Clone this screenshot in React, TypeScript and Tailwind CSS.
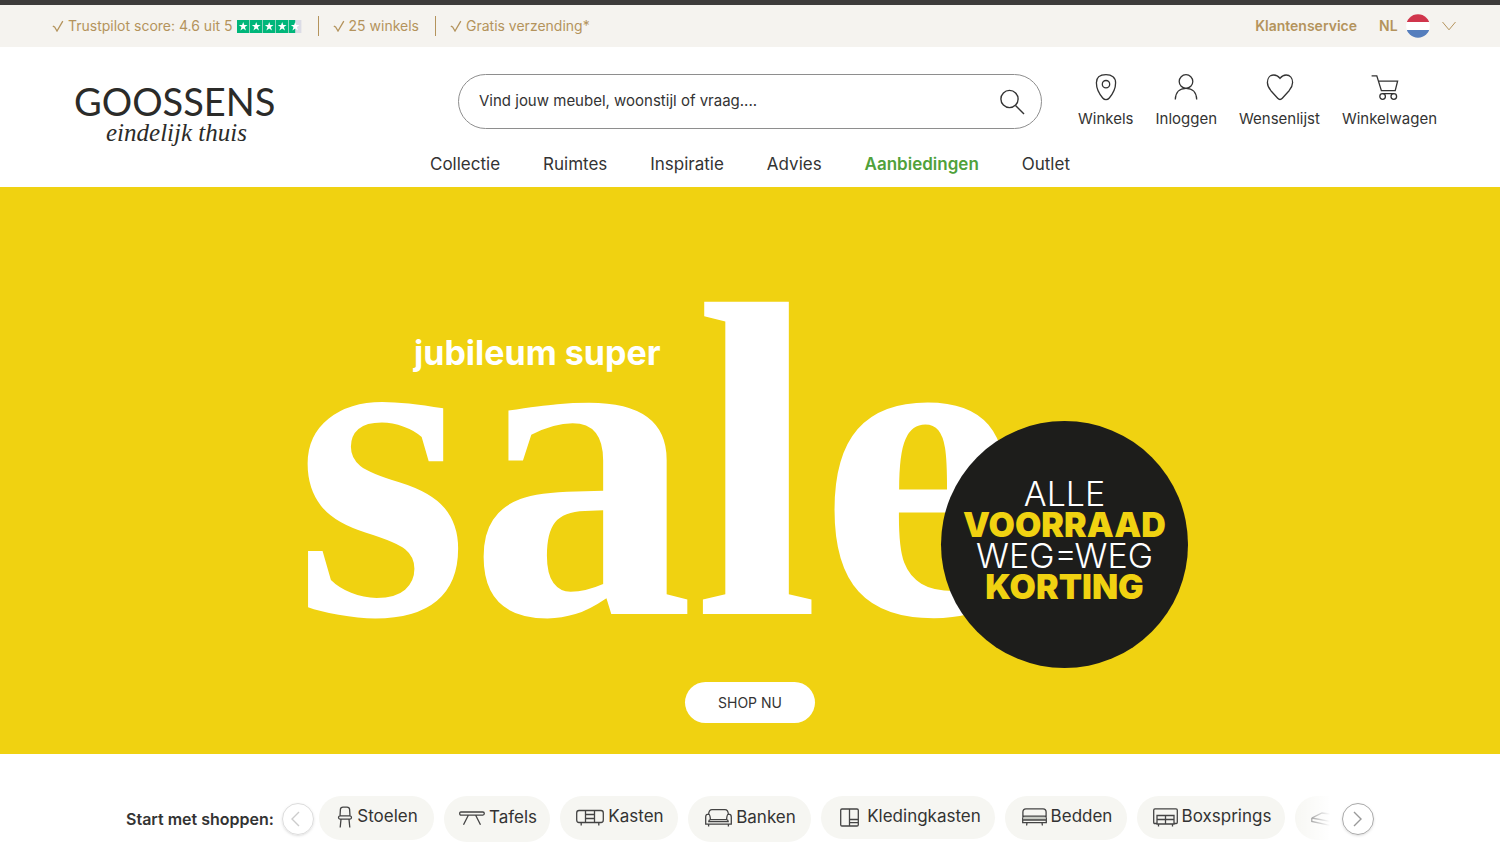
import { useRef, useState } from "react";
import type { ReactNode } from "react";

const NAV_ITEMS = ["Collectie", "Ruimtes", "Inspiratie", "Advies", "Aanbiedingen", "Outlet"];

// Line icons
function Check() {
  return (
    <svg width="12" height="12" viewBox="0 0 12 12" fill="none" stroke="currentColor" strokeWidth="1.3" aria-hidden="true">
      <path d="M.8 6.2 2.6 7 5 11 10.8 1.2" />
    </svg>
  );
}

function Star({ half = false }: { half?: boolean }) {
  return (
    <svg width="13" height="13" viewBox="0 0 13 13" aria-hidden="true">
      <rect width="12.4" height="13" fill="#dcdce6" />
      <rect width={half ? 6.2 : 12.4} height="13" fill="#00b67a" />
      <path d="M6.2 2 7.3 5.1H10.6L7.9 7.1 9 10.4 6.2 8.4 3.4 10.4 4.5 7.1 1.8 5.1H5.1Z" fill="#fff" />
    </svg>
  );
}

function Flag() {
  return (
    <svg width="24" height="24" viewBox="0 0 24 24" aria-hidden="true">
      <clipPath id="flag">
        <circle cx="12" cy="12" r="11.8" />
      </clipPath>
      <g clipPath="url(#flag)">
        <rect width="24" height="8" fill="#d0354c" />
        <rect y="8" width="24" height="8" fill="#fff" />
        <rect y="16" width="24" height="8" fill="#557ebd" />
      </g>
    </svg>
  );
}

const lineIcon = {
  width: 28,
  height: 28,
  viewBox: "0 0 28 28",
  fill: "none",
  stroke: "currentColor",
  strokeWidth: 1.3,
  "aria-hidden": true,
} as const;

const ACTIONS: { label: string; icon: ReactNode }[] = [
  {
    label: "Winkels",
    icon: (
      <svg {...lineIcon}>
        <path d="M14 1.7C8.2 1.7 4.4 4.5 4.4 9.8c0 5 2.7 11 6.3 15.2 1.9 2.2 4.7 2.2 6.6 0 3.6-4.2 6.3-10.2 6.3-15.2 0-5.3-3.8-8.1-9.6-8.1Z" />
        <circle cx="14" cy="11.2" r="3.7" />
      </svg>
    ),
  },
  {
    label: "Inloggen",
    icon: (
      <svg {...lineIcon}>
        <circle cx="14" cy="8.5" r="6.8" />
        <path d="M3.3 26.5C3.5 19.5 7.6 15.4 14 15.4s10.5 4.1 10.7 11.1" />
      </svg>
    ),
  },
  {
    label: "Wensenlijst",
    icon: (
      <svg {...lineIcon}>
        <path d="M14 5.4c-1.7-2.2-3.6-3.4-6.1-3.4-4 0-6.5 3.1-6.5 7.6 0 3.4 1.4 5.6 3.5 8.1l6.8 7.5c1.5 1.7 3.1 1.7 4.6 0l6.8-7.5c2.1-2.5 3.5-4.7 3.5-8.1 0-4.5-2.5-7.6-6.5-7.6-2.5 0-4.4 1.2-6.1 3.4Z" />
      </svg>
    ),
  },
  {
    label: "Winkelwagen",
    icon: (
      <svg {...lineIcon} className="overflow-visible">
        <path d="M-3.4 2.8H1.8L6.4 17.6H20.2L22.6 8.2H3.6M7.6 20.7H18.8" />
        <circle cx="7.6" cy="23.5" r="2.8" />
        <circle cx="18.8" cy="23.5" r="2.8" />
      </svg>
    ),
  },
];

const chipIcon = {
  height: 24,
  fill: "none",
  stroke: "#444",
  strokeWidth: 1.3,
  className: "shrink-0",
  "aria-hidden": true,
} as const;

const CATEGORIES: { label: string; box: string; icon: ReactNode }[] = [
  {
    label: "Stoelen",
    box: "w-[115px] h-11",
    icon: (
      <svg {...chipIcon} width="16" viewBox="0 0 16 24">
        <path d="M3 11 3.4 4.4Q3.6 2.2 6 2.2H10Q12.4 2.2 12.6 4.4L13 11M3 10.8H13Q14.5 11 14.5 12.5T13 14.2H3Q1.5 14 1.5 12.5T3 10.8ZM4 14.3 3.2 22.5M12 14.3 12.8 22.5" />
      </svg>
    ),
  },
  {
    label: "Tafels",
    box: "w-[106px] h-[46px]",
    icon: (
      <svg {...chipIcon} width="26" viewBox="0 0 26 24">
        <path d="M2.2 6H23.8Q25.3 6 25.3 7.5T23.8 9.2H2.2Q.7 9.2.7 7.5T2.2 6ZM9.2 9.5 4.5 18.8M16.8 9.5 21.5 18.8" />
      </svg>
    ),
  },
  {
    label: "Kasten",
    box: "w-[118px] h-11",
    icon: (
      <svg {...chipIcon} width="28" viewBox="0 0 28 24">
        <path d="M3 5.5H25Q27.3 5.5 27.3 8V15Q27.3 17.5 25 17.5H3Q.7 17.5.7 15V8Q.7 5.5 3 5.5ZM9.5 5.5V17.5M18.5 5.5V17.5M9.5 9.5H18.5M9.5 13.5H18.5M5.2 17.5V20.5M22.8 17.5V20.5" />
      </svg>
    ),
  },
  {
    label: "Banken",
    box: "w-[123px] h-[46px]",
    icon: (
      <svg {...chipIcon} width="27" viewBox="0 0 27 24">
        <path d="M3.6 8.2Q4 3.6 7 3.6H20Q23 3.6 23.4 8.2M3.6 8.2Q.7 8.2.7 11V18.2H26.3V11Q26.3 8.2 23.4 8.2Q21.9 8.4 21.6 13.6H5.4Q5.1 8.4 3.6 8.2M3.6 18.2V20.5M23.4 18.2V20.5M5.4 13.6Q3.8 13.8 3.8 15.6H23.2Q23.2 13.8 21.6 13.6" />
      </svg>
    ),
  },
  {
    label: "Kledingkasten",
    box: "w-[174px] h-[43px]",
    icon: (
      <svg {...chipIcon} width="26" viewBox="0 0 26 24">
        <path d="M5 4H20Q21.3 4 21.3 5.3V19.7Q21.3 21 20 21H5Q3.7 21 3.7 19.7V5.3Q3.7 4 5 4ZM12.5 4V21M12.5 14.5H21.3M12.5 17.7H21.3" />
      </svg>
    ),
  },
  {
    label: "Bedden",
    box: "w-[122px] h-11",
    icon: (
      <svg {...chipIcon} width="25" viewBox="0 0 25 24">
        <path d="M2 11.5H23V15H2Z" fill="#c9ccc5" stroke="none" />
        <path d="M.9 13V7Q.9 3.8 4 3.8H21Q24.1 3.8 24.1 7V13M2.5 11.2H22.5Q24.3 11.2 24.3 13V17.6H.7V13Q.7 11.2 2.5 11.2ZM.7 15H24.3M5 17.6 4.6 20.5M20 17.6 20.4 20.5" />
      </svg>
    ),
  },
  {
    label: "Boxsprings",
    box: "w-[148px] h-[43px]",
    icon: (
      <svg {...chipIcon} width="25" viewBox="0 0 25 24">
        <path d="M4 18.5H1.8Q.7 18.5.7 17.3V5.2Q.7 3.8 2 3.8H23Q24.3 3.8 24.3 5.2V17.3Q24.3 18.5 23.2 18.5H21M4 10.5H21V19H4ZM4 14.5H21M12.5 10.5V18.8M5.5 19V21.5M19.5 19V21.5" />
      </svg>
    ),
  },
];

function TopBar() {
  return (
    <div className="flex h-[47px] items-center justify-between border-t-[5px] border-[#3d3b3b] bg-[#f5f3ef] pr-[44px] pl-[52px] text-[14px] leading-5 text-[#b4935c]">
      <ul className="flex items-center">
        <li className="flex items-center gap-1">
          <Check />
          <span>Trustpilot score: 4.6 uit 5</span>
          <span className="flex">
            <Star />
            <Star />
            <Star />
            <Star />
            <Star half />
          </span>
        </li>
        <li className="ml-4 flex items-center border-l border-[#b4935c] pl-[14px]">
          <Check />
          <span className="ml-1">25 winkels</span>
        </li>
        <li className="ml-4 flex items-center border-l border-[#b4935c] pl-[14px]">
          <Check />
          <span className="ml-1">Gratis verzending*</span>
        </li>
      </ul>
      <div className="flex items-center gap-[22px] font-semibold">
        <a href="#klantenservice">Klantenservice</a>
        <div className="relative">
          <select aria-label="Taal" className="block h-6 w-[77px] appearance-none bg-transparent font-semibold outline-none">
            <option>NL</option>
            <option>BE</option>
          </select>
          <span className="pointer-events-none absolute inset-y-0 right-0 flex items-center gap-3">
            <Flag />
            <svg width="14" height="10" viewBox="0 0 14 10" fill="none" stroke="currentColor" aria-hidden="true">
              <path d="M.5 1 7 8.8 13.5 1" />
            </svg>
          </span>
        </div>
      </div>
    </div>
  );
}

function Header() {
  const [query, setQuery] = useState("");

  return (
    <header className="grid h-[140px] grid-cols-[1fr_minmax(0,640px)_1fr] bg-white text-[#333]">
      {/* Logo */}
      <a href="#home" className="flex flex-col pt-9 pl-[74px] text-[#2b2b29]">
        <span className="font-['Lato'] text-[38px] leading-9">GOOSSENS</span>
        <span className="pl-8 font-['Liberation_Serif'] text-[25px] leading-7 italic">eindelijk thuis</span>
      </a>

      <div className="pt-[27px]">
        <form
          role="search"
          onSubmit={(e) => e.preventDefault()}
          className="mx-7 flex h-[55px] items-center rounded-full border border-[#8e8e8e] pr-4 pl-5"
        >
          <input
            type="search"
            aria-label="Zoeken"
            placeholder="Vind jouw meubel, woonstijl of vraag...."
            value={query}
            onChange={(e) => setQuery(e.target.value)}
            className="min-w-0 flex-1 bg-transparent text-[15px] outline-none placeholder:text-[#333]"
          />
          <button type="submit" aria-label="Zoek">
            <svg width="26" height="26" viewBox="0 0 26 26" fill="none" stroke="currentColor" strokeWidth="1.4" aria-hidden="true">
              <circle cx="10.5" cy="10" r="8.6" />
              <path d="M16.5 16.4 25 25" />
            </svg>
          </button>
        </form>
        <nav className="mt-[23px] flex justify-between text-[17px] leading-6">
          {NAV_ITEMS.map((item) => (
            <a
              key={item}
              href={`#${item.toLowerCase()}`}
              className={item === "Aanbiedingen" ? "font-semibold text-[#4fa13a]" : ""}
            >
              {item}
            </a>
          ))}
        </nav>
      </div>

      <div className="flex items-start justify-end gap-[22px] pt-[26px] pr-[63px] text-[15px] leading-5">
        {ACTIONS.map((action) => (
          <a key={action.label} href={`#${action.label.toLowerCase()}`} className="flex flex-col items-center gap-2">
            {action.icon}
            {action.label}
          </a>
        ))}
      </div>
    </header>
  );
}

function Hero() {
  return (
    <section className="flex h-[567px] flex-col items-center bg-[#f0d211] pt-[75px]">
      <div className="relative w-[876px] text-white">
        <h1 className="-ml-[18px] font-['Liberation_Serif'] text-[450px] leading-[400px] font-bold">sale</h1>
        <p className="absolute top-[71px] left-[102px] text-[34px] leading-10 font-bold">jubileum super</p>
        <div className="absolute top-[159px] right-0 flex size-[247px] flex-col items-center justify-center rounded-full bg-[#1d1d1b] pb-[10px] text-[34px] leading-[31px] font-light">
          <span>ALLE</span>
          <strong className="font-black text-[#f0d211]">VOORRAAD</strong>
          <span>WEG=WEG</span>
          <strong className="font-black text-[#f0d211]">KORTING</strong>
        </div>
      </div>
      <a href="#sale" className="mt-5 flex h-[41px] w-[130px] items-center justify-center rounded-full bg-white text-[14px] text-[#333]">
        SHOP NU
      </a>
    </section>
  );
}

function CategoryBar() {
  const track = useRef<HTMLUListElement>(null);
  const scroll = (left: number) => track.current?.scrollBy({ left, behavior: "smooth" });

  return (
    <section className="flex items-start bg-white px-[126px] pt-[42px] pb-2 text-[#333]">
      <h2 className="mt-[11px] w-[156px] shrink-0 text-[16px] leading-6 font-semibold whitespace-nowrap">Start met shoppen:</h2>
      <button
        type="button"
        aria-label="Vorige"
        onClick={() => scroll(-300)}
        className="mt-[7px] mr-[5px] flex size-8 shrink-0 items-center justify-center rounded-full border border-[#dcdcdc] pr-1 text-[#ccc] shadow-sm"
      >
        <svg width="10" height="16" viewBox="0 0 10 16" fill="none" stroke="currentColor" strokeWidth="1.4" aria-hidden="true">
          <path d="M8 1 1 8 8 15" />
        </svg>
      </button>
      <div className="relative min-w-0 flex-1">
        <ul ref={track} className="flex items-start gap-[10px] overflow-hidden">
          {CATEGORIES.map((category) => (
            <li key={category.label} className="shrink-0">
              <a
                href={`#${category.label.toLowerCase()}`}
                className={`flex items-center justify-center gap-1 rounded-full bg-[#f6f6f2] pb-[2px] pl-[2px] text-[17px] ${category.box}`}
              >
                {category.icon}
                {category.label}
              </a>
            </li>
          ))}
          <li className="shrink-0">
            <a href="#matrassen" aria-label="Matrassen" className="flex h-11 w-[140px] items-center rounded-full bg-[#f6f6f2] pl-4">
              <svg {...chipIcon} width="28" viewBox="0 0 28 24">
                <path d="M.8 12 11 7 27 9M.8 12V15.5L20 19.5M.8 12 20 15.5" />
              </svg>
            </a>
          </li>
        </ul>
        <div className="pointer-events-none absolute inset-y-0 right-0 w-10 bg-gradient-to-r from-transparent to-white" />
      </div>
      <button
        type="button"
        aria-label="Volgende"
        onClick={() => scroll(300)}
        className="mt-[7px] ml-3 flex size-8 shrink-0 items-center justify-center rounded-full border border-[#a9a9a9] text-[#999] shadow-sm"
      >
        <svg width="10" height="16" viewBox="0 0 10 16" fill="none" stroke="currentColor" strokeWidth="1.4" aria-hidden="true">
          <path d="M1 1 8 8 1 15" />
        </svg>
      </button>
    </section>
  );
}

export default function App() {
  return (
    <div className="min-h-screen bg-white font-['Inter',sans-serif]">
      <TopBar />
      <Header />
      <main>
        <Hero />
        <CategoryBar />
      </main>
    </div>
  );
}
